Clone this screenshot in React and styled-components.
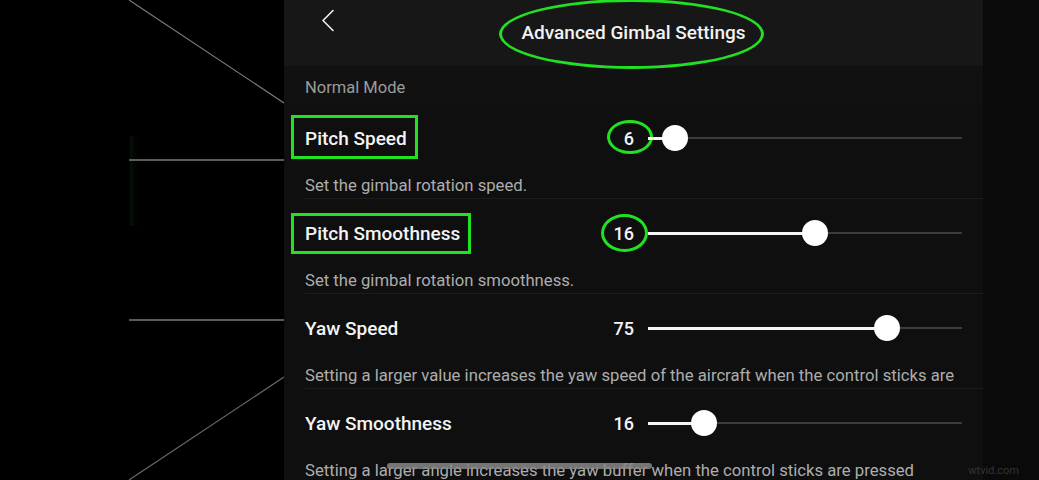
import React from "react";
import styled, { createGlobalStyle } from "styled-components";

const Global = createGlobalStyle`
  html, body { margin: 0; padding: 0; background: #000; }
  body { font-family: Roboto, "Noto Sans", "Liberation Sans", sans-serif; }
`;

const GREEN = "#22e022";

const Page = styled.div`
  position: relative;
  display: flex;
  width: 1039px;
  height: 480px;
  overflow: hidden;
  background: #000;
`;

const LeftPane = styled.div`
  width: 284px;
  flex: none;
  background: #000;
`;

const Lines = styled.svg`
  display: block;
`;

const Panel = styled.div`
  position: relative;
  width: 699px;
  flex: none;
  display: flex;
  flex-direction: column;
  background: #0f0f0f;
`;

const RightStrip = styled.div`
  flex: 1;
  background: #0a0a0a;
`;

const Header = styled.div`
  height: 66px;
  flex: none;
  display: flex;
  align-items: center;
  justify-content: center;
  position: relative;
  background: #171717;
`;

const Back = styled.svg`
  position: absolute;
  left: 37px;
  top: 9px;
`;

const TitleWrap = styled.div`
  position: relative;
  margin-top: -2px;
`;

const Title = styled.div`
  color: #f2f2f2;
  font-size: 19px;
  font-weight: 500;
`;

const Ring = styled.div`
  position: absolute;
  border: 3.5px solid ${GREEN};
  border-radius: ${(p) => (p.$round ? "50%" : "0")};
  pointer-events: none;
  box-sizing: border-box;
`;

const SectionHeader = styled.div`
  height: 38px;
  flex: none;
  padding-left: 21px;
  display: flex;
  align-items: center;
  padding-top: 4px;
  box-sizing: border-box;
  color: #9c9c9c;
  font-size: 16.5px;
  background: #111111;
`;

const Block = styled.div`
  margin-left: 21px;
  flex: none;
`;

const ControlRow = styled.div`
  height: 68px;
  display: flex;
  align-items: center;
  padding-right: 21px;
`;

const LabelWrap = styled.div`
  position: relative;
  flex: 1;
  display: flex;
`;

const Label = styled.span`
  position: relative;
  color: #f4f4f4;
  font-size: 19px;
  font-weight: 500;
`;

const SliderGroup = styled.div`
  display: flex;
  align-items: center;
`;

const ValueBox = styled.div`
  position: relative;
  width: 40px;
  margin-right: 14px;
  display: flex;
  justify-content: flex-end;
`;

const Value = styled.span`
  color: #f4f4f4;
  font-size: 18px;
  font-weight: 500;
`;

const Track = styled.div`
  position: relative;
  width: 314px;
  height: 26px;
  &::before {
    content: "";
    position: absolute;
    left: 0;
    right: 0;
    top: 12px;
    height: 2px;
    background: #3c3c3c;
  }
`;

const Fill = styled.div`
  position: absolute;
  left: 0;
  top: 11.5px;
  height: 3px;
  background: #f5f5f5;
`;

const Thumb = styled.div`
  position: absolute;
  top: 0;
  width: 26px;
  height: 26px;
  margin-left: -13px;
  border-radius: 50%;
  background: #fff;
`;

const Desc = styled.div`
  height: 27px;
  display: flex;
  align-items: flex-start;
  color: #adadad;
  font-size: 16.7px;
  white-space: nowrap;
  overflow: hidden;
  border-bottom: 1px solid ${(p) => (p.$last ? "transparent" : "#1d1d1d")};
  box-sizing: border-box;
  line-height: 20px;
  padding-top: 4px;
`;

const HomeBar = styled.div`
  position: absolute;
  left: 103px;
  top: 463px;
  width: 265px;
  height: 6px;
  border-radius: 3px;
  background: rgba(135, 135, 135, 0.85);
`;

const Watermark = styled.div`
  position: absolute;
  right: 20px;
  bottom: 3px;
  color: #333;
  font-size: 11px;
`;

const settings = [
  {
    label: "Pitch Speed",
    value: "6",
    thumb: 27,
    desc: "Set the gimbal rotation speed.",
    labelRing: { left: -14, top: -23, width: 127, height: 44 },
    valueRing: { right: -19, top: -18, width: 46, height: 34 },
  },
  {
    label: "Pitch Smoothness",
    value: "16",
    thumb: 167,
    desc: "Set the gimbal rotation smoothness.",
    labelRing: { left: -14, top: -20, width: 180, height: 41 },
    valueRing: { right: -14, top: -19, width: 47, height: 38 },
  },
  {
    label: "Yaw Speed",
    value: "75",
    thumb: 239,
    desc: "Setting a larger value increases the yaw speed of the aircraft when the control sticks are",
  },
  {
    label: "Yaw Smoothness",
    value: "16",
    thumb: 56,
    desc: "Setting a larger angle increases the yaw buffer when the control sticks are pressed",
  },
];

function Setting({ s, last }) {
  return (
    <Block>
      <ControlRow>
        <LabelWrap>
          <Label>
            {s.label}
            {s.labelRing && (
              <Ring
                style={{
                  left: s.labelRing.left,
                  top: `calc(50% + ${s.labelRing.top}px)`,
                  width: s.labelRing.width,
                  height: s.labelRing.height,
                }}
              />
            )}
          </Label>
        </LabelWrap>
        <SliderGroup>
          <ValueBox>
            <Value>{s.value}</Value>
            {s.valueRing && (
              <Ring
                $round
                style={{
                  right: s.valueRing.right,
                  top: `calc(50% + ${s.valueRing.top}px)`,
                  width: s.valueRing.width,
                  height: s.valueRing.height,
                }}
              />
            )}
          </ValueBox>
          <Track>
            <Fill style={{ width: s.thumb }} />
            <Thumb style={{ left: s.thumb }} />
          </Track>
        </SliderGroup>
      </ControlRow>
      <Desc $last={last}>{s.desc}</Desc>
    </Block>
  );
}

export default function App() {
  return (
    <>
      <Global />
      <Page>
        <LeftPane>
          <Lines width="284" height="480" viewBox="0 0 284 480">
            <defs>
              <linearGradient id="glow" x1="0" y1="0" x2="1" y2="0">
                <stop offset="0" stopColor="#0a1a0b" stopOpacity="0.7" />
                <stop offset="1" stopColor="#000" stopOpacity="0" />
              </linearGradient>
            </defs>
            <rect x="130" y="136" width="10" height="90" fill="url(#glow)" />
            <line x1="129" y1="0" x2="284" y2="103" stroke="#7a7a7a" strokeWidth="1.2" />
            <line x1="129" y1="160" x2="284" y2="160" stroke="#7a7a7a" strokeWidth="1.4" />
            <line x1="129" y1="320" x2="284" y2="320" stroke="#7a7a7a" strokeWidth="1.4" />
            <line x1="284" y1="377" x2="129" y2="480" stroke="#6a6a6a" strokeWidth="1.2" />
          </Lines>
        </LeftPane>
        <Panel>
          <Header>
            <Back width="14" height="24" viewBox="0 0 14 24">
              <polyline
                points="12,1.5 2,11.5 12,21.5"
                fill="none"
                stroke="#f0f0f0"
                strokeWidth="1.6"
                strokeLinecap="round"
                strokeLinejoin="round"
              />
            </Back>
            <TitleWrap>
              <Title>Advanced Gimbal Settings</Title>
              <Ring
                $round
                style={{ left: -22, right: -18, top: -22, bottom: -25 }}
              />
            </TitleWrap>
          </Header>
          <SectionHeader>Normal Mode</SectionHeader>
          {settings.map((s, i) => (
            <Setting key={s.label} s={s} last={i === settings.length - 1} />
          ))}
          <HomeBar />
        </Panel>
        <RightStrip />
        <Watermark>wtvid.com</Watermark>
      </Page>
    </>
  );
}
